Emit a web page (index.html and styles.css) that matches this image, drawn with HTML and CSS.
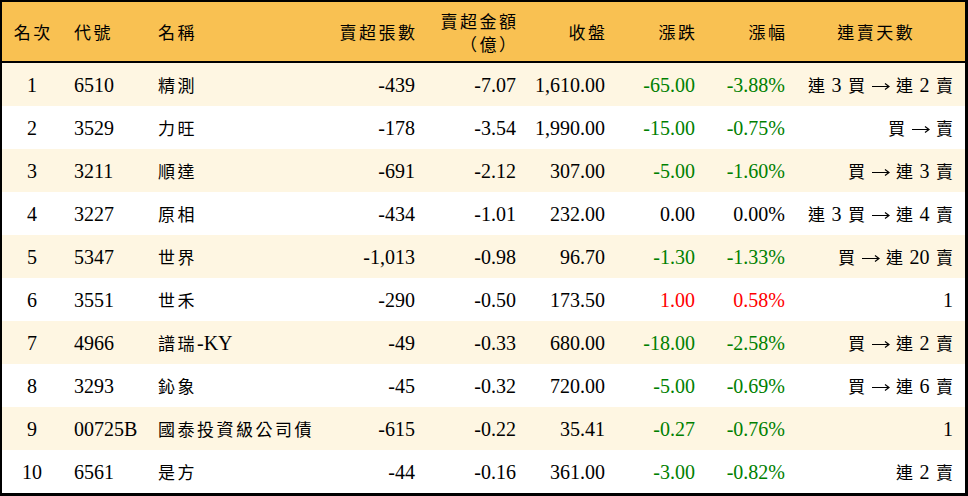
FILE: index.html
```html
<!DOCTYPE html>
<html lang="zh-Hant">
<head>
<meta charset="utf-8">
<title>賣超排行</title>
<link rel="stylesheet" href="styles.css">
</head>
<body>
<div class="board">
  <div class="row head">
    <div class="c c1"><span class="zh">名次</span></div>
    <div class="c c2"><span class="zh">代號</span></div>
    <div class="c c3"><span class="zh">名稱</span></div>
    <div class="c r"><span class="zh">賣超張數</span></div>
    <div class="c r two"><span class="zh">賣超金額</span><span class="zh">（億）</span></div>
    <div class="c r"><span class="zh">收盤</span></div>
    <div class="c r"><span class="zh">漲跌</span></div>
    <div class="c r"><span class="zh">漲幅</span></div>
    <div class="c c9h"><span class="zh">連賣天數</span></div>
  </div>

  <div class="row odd">
    <div class="c c1">1</div><div class="c c2">6510</div><div class="c c3"><span class="zh">精測</span></div>
    <div class="c r">-439</div><div class="c r">-7.07</div><div class="c r">1,610.00</div>
    <div class="c r down">-65.00</div><div class="c r down">-3.88%</div>
    <div class="c r"><span class="seq"><span class="zh">連</span> 3 <span class="zh">買</span> <svg class="arr" viewBox="0 0 18 10" aria-label="→"><path d="M0 5.5H17M13 2.5L17 5.5L13 8.5"/></svg> <span class="zh">連</span> 2 <span class="zh">賣</span></span></div>
  </div>
  <div class="row">
    <div class="c c1">2</div><div class="c c2">3529</div><div class="c c3"><span class="zh">力旺</span></div>
    <div class="c r">-178</div><div class="c r">-3.54</div><div class="c r">1,990.00</div>
    <div class="c r down">-15.00</div><div class="c r down">-0.75%</div>
    <div class="c r"><span class="seq"><span class="zh">買</span> <svg class="arr" viewBox="0 0 18 10" aria-label="→"><path d="M0 5.5H17M13 2.5L17 5.5L13 8.5"/></svg> <span class="zh">賣</span></span></div>
  </div>
  <div class="row odd">
    <div class="c c1">3</div><div class="c c2">3211</div><div class="c c3"><span class="zh">順達</span></div>
    <div class="c r">-691</div><div class="c r">-2.12</div><div class="c r">307.00</div>
    <div class="c r down">-5.00</div><div class="c r down">-1.60%</div>
    <div class="c r"><span class="seq"><span class="zh">買</span> <svg class="arr" viewBox="0 0 18 10" aria-label="→"><path d="M0 5.5H17M13 2.5L17 5.5L13 8.5"/></svg> <span class="zh">連</span> 3 <span class="zh">賣</span></span></div>
  </div>
  <div class="row">
    <div class="c c1">4</div><div class="c c2">3227</div><div class="c c3"><span class="zh">原相</span></div>
    <div class="c r">-434</div><div class="c r">-1.01</div><div class="c r">232.00</div>
    <div class="c r">0.00</div><div class="c r">0.00%</div>
    <div class="c r"><span class="seq"><span class="zh">連</span> 3 <span class="zh">買</span> <svg class="arr" viewBox="0 0 18 10" aria-label="→"><path d="M0 5.5H17M13 2.5L17 5.5L13 8.5"/></svg> <span class="zh">連</span> 4 <span class="zh">賣</span></span></div>
  </div>
  <div class="row odd">
    <div class="c c1">5</div><div class="c c2">5347</div><div class="c c3"><span class="zh">世界</span></div>
    <div class="c r">-1,013</div><div class="c r">-0.98</div><div class="c r">96.70</div>
    <div class="c r down">-1.30</div><div class="c r down">-1.33%</div>
    <div class="c r"><span class="seq"><span class="zh">買</span> <svg class="arr" viewBox="0 0 18 10" aria-label="→"><path d="M0 5.5H17M13 2.5L17 5.5L13 8.5"/></svg> <span class="zh">連</span> 20 <span class="zh">賣</span></span></div>
  </div>
  <div class="row">
    <div class="c c1">6</div><div class="c c2">3551</div><div class="c c3"><span class="zh">世禾</span></div>
    <div class="c r">-290</div><div class="c r">-0.50</div><div class="c r">173.50</div>
    <div class="c r up">1.00</div><div class="c r up">0.58%</div>
    <div class="c r">1</div>
  </div>
  <div class="row odd">
    <div class="c c1">7</div><div class="c c2">4966</div><div class="c c3"><span class="seq"><span class="zh">譜瑞</span>-KY</span></div>
    <div class="c r">-49</div><div class="c r">-0.33</div><div class="c r">680.00</div>
    <div class="c r down">-18.00</div><div class="c r down">-2.58%</div>
    <div class="c r"><span class="seq"><span class="zh">買</span> <svg class="arr" viewBox="0 0 18 10" aria-label="→"><path d="M0 5.5H17M13 2.5L17 5.5L13 8.5"/></svg> <span class="zh">連</span> 2 <span class="zh">賣</span></span></div>
  </div>
  <div class="row">
    <div class="c c1">8</div><div class="c c2">3293</div><div class="c c3"><span class="zh">鈊象</span></div>
    <div class="c r">-45</div><div class="c r">-0.32</div><div class="c r">720.00</div>
    <div class="c r down">-5.00</div><div class="c r down">-0.69%</div>
    <div class="c r"><span class="seq"><span class="zh">買</span> <svg class="arr" viewBox="0 0 18 10" aria-label="→"><path d="M0 5.5H17M13 2.5L17 5.5L13 8.5"/></svg> <span class="zh">連</span> 6 <span class="zh">賣</span></span></div>
  </div>
  <div class="row odd">
    <div class="c c1">9</div><div class="c c2">00725B</div><div class="c c3"><span class="zh">國泰投資級公司債</span></div>
    <div class="c r">-615</div><div class="c r">-0.22</div><div class="c r">35.41</div>
    <div class="c r down">-0.27</div><div class="c r down">-0.76%</div>
    <div class="c r">1</div>
  </div>
  <div class="row">
    <div class="c c1">10</div><div class="c c2">6561</div><div class="c c3"><span class="zh">是方</span></div>
    <div class="c r">-44</div><div class="c r">-0.16</div><div class="c r">361.00</div>
    <div class="c r down">-3.00</div><div class="c r down">-0.82%</div>
    <div class="c r"><span class="seq"><span class="zh">連</span> 2 <span class="zh">賣</span></span></div>
  </div>
</div>
</body>
</html>
```

FILE: styles.css
```css
html, body {
  margin: 0;
  padding: 0;
  background: #fff;
}

.board {
  box-sizing: border-box;
  width: 968px;
  height: 496px;
  border-style: solid;
  border-color: #000;
  border-width: 2px 3px 3px 2px;
  font-family: "Liberation Serif", "Noto Sans CJK TC", serif;
  font-size: 20px;
  color: #000;
  display: flex;
  flex-direction: column;
}

.row {
  display: grid;
  grid-template-columns: 60px 84px 184px 97px 101px 89px 90px 90px 168px;
  height: 43px;
  background: #fff;
}

.row.odd {
  background: #fef6e2;
}

.row.head {
  height: 59px;
  background: #f9c152;
  border-bottom: 2px solid #000;
}

.c {
  display: flex;
  align-items: center;
  white-space: nowrap;
  line-height: 1;
}

.c1 {
  justify-content: center;
}

.c2,
.c3 {
  padding-left: 12px;
}

.r {
  justify-content: flex-end;
  padding-right: 12px;
}

.c9h {
  justify-content: center;
  padding-right: 12px;
}

.two {
  flex-direction: column;
  justify-content: center;
  align-items: flex-end;
  gap: 4px;
}

.seq {
  white-space: pre;
  word-spacing: 1.5px;
}

.zh {
  font-family: "Noto Sans CJK TC", "Liberation Serif", sans-serif;
  font-size: 17px;
  letter-spacing: 2.5px;
  margin-right: -2.5px;
  line-height: 19px;
}

.seq .zh {
  letter-spacing: 0;
  margin-right: 0;
}

.c3 .seq .zh {
  letter-spacing: 2.5px;
}

.arr {
  display: inline-block;
  width: 18px;
  height: 10px;
  vertical-align: 1px;
  fill: none;
  stroke: #000;
  stroke-width: 1.2;
}

.down {
  color: #008000;
}

.up {
  color: #ff0000;
}
```
